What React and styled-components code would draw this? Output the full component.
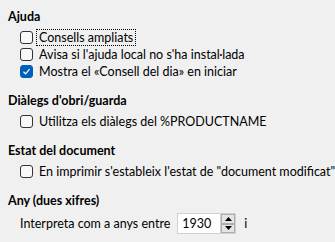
import styled, { createGlobalStyle } from "styled-components";

const Global = createGlobalStyle`
  html, body {
    margin: 0;
    padding: 0;
    background: #f0f0f0;
  }
  body {
    font-family: Lato, "Noto Sans", sans-serif;
    font-size: 12.5px;
    color: #000;
  }
`;

const Page = styled.div`
  width: 335px;
  height: 242px;
  padding: 8px 0 0 8px;
  box-sizing: border-box;
  display: flex;
  flex-direction: column;
  gap: 12px;
  overflow: hidden;
`;

const Section = styled.div`
  display: flex;
  flex-direction: column;
`;

const Heading = styled.div`
  font-weight: 700;
  line-height: 17px;
  height: 17px;
  margin-bottom: 4px;
`;

const Row = styled.div`
  display: flex;
  align-items: center;
  height: 17px;
  padding-left: 12px;
`;

const Box = styled.span`
  width: 13px;
  height: 13px;
  box-sizing: border-box;
  border-radius: 3px;
  border: 1px solid ${(p) => (p.$checked ? "#005fb8" : "#333")};
  background: ${(p) => (p.$checked ? "#005fb8" : "#f8f8f8")};
  display: flex;
  align-items: center;
  justify-content: center;
  flex-shrink: 0;
`;

const Label = styled.span`
  margin-left: 3px;
  padding: 0 2px;
  line-height: 15px;
  border: 1px dotted ${(p) => (p.$focus ? "#000" : "transparent")};
  white-space: nowrap;
`;

const SpinRow = styled.div`
  display: flex;
  align-items: center;
  height: 21px;
  padding-left: 12px;
  white-space: nowrap;
`;

const Spin = styled.div`
  display: flex;
  height: 21px;
  margin-left: 7px;
  border: 1px solid #d0d0d0;
  box-sizing: border-box;
  background: #fff;
`;

const SpinInput = styled.div`
  width: 38px;
  padding-left: 4px;
  line-height: 19px;
`;

const SpinButtons = styled.div`
  width: 14px;
  display: flex;
  flex-direction: column;
  background: #f0f0f0;
  border-left: 1px solid #d0d0d0;
`;

const SpinBtn = styled.div`
  flex: 1;
  display: flex;
  align-items: center;
  justify-content: center;
  border: 1px solid #adadad;
  background: #e5e5e5;
`;

const Trailing = styled.span`
  margin-left: 8px;
`;

const Check = ({ checked, focus, children }) => (
  <Row>
    <Box $checked={checked}>
      {checked && (
        <svg width="9" height="9" viewBox="0 0 9 9">
          <path d="M1.5 4.8 L3.6 6.8 L7.6 2.2" fill="none" stroke="#fff" strokeWidth="1.2" />
        </svg>
      )}
    </Box>
    <Label $focus={focus}>{children}</Label>
  </Row>
);

const Arrow = ({ up }) => (
  <svg width="7" height="4" viewBox="0 0 7 4">
    <path d={up ? "M0 4 L3.5 0 L7 4 Z" : "M0 0 L3.5 4 L7 0 Z"} fill="#000" />
  </svg>
);

export default function App() {
  return (
    <>
      <Global />
      <Page>
        <Section>
          <Heading>Ajuda</Heading>
          <Check focus>Consells ampliats</Check>
          <Check>Avisa si l'ajuda local no s'ha instal·lada</Check>
          <Check checked>Mostra el «Consell del dia» en iniciar</Check>
        </Section>
        <Section>
          <Heading>Diàlegs d'obri/guarda</Heading>
          <Check>Utilitza els diàlegs del %PRODUCTNAME</Check>
        </Section>
        <Section>
          <Heading>Estat del document</Heading>
          <Check>En imprimir s'estableix l'estat de "document modificat"</Check>
        </Section>
        <Section>
          <Heading>Any (dues xifres)</Heading>
          <SpinRow>
            Interpreta com a anys entre
            <Spin>
              <SpinInput>1930</SpinInput>
              <SpinButtons>
                <SpinBtn><Arrow up /></SpinBtn>
                <SpinBtn><Arrow /></SpinBtn>
              </SpinButtons>
            </Spin>
            <Trailing>i</Trailing>
          </SpinRow>
        </Section>
      </Page>
    </>
  );
}
